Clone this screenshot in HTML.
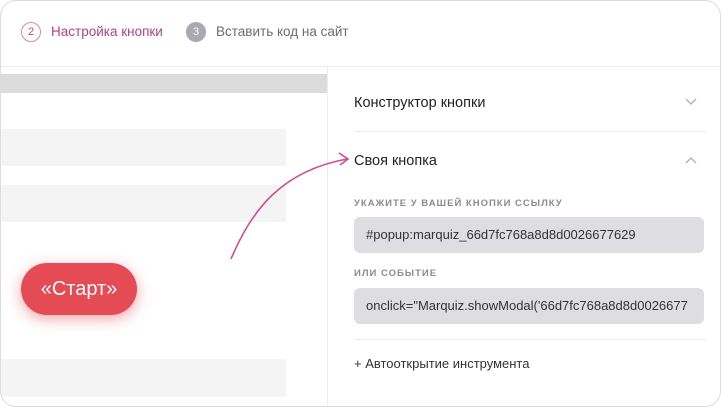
<!DOCTYPE html>
<html><head><meta charset="utf-8"><style>
*{margin:0;padding:0;box-sizing:border-box}
body{width:721px;height:407px;background:#fff;font-family:"Liberation Sans",sans-serif;position:relative;overflow:hidden}
.card{position:absolute;left:0;top:0;width:721px;height:407px;border:1px solid #dcdce0;border-radius:16px;overflow:hidden;background:#fff}
.abs{position:absolute}
.g{position:absolute;background:#f4f4f5;left:0;width:285px}
.lbl{position:absolute;left:353px;font-size:9.5px;letter-spacing:1px;color:#8a8a94;font-weight:bold}
.inp{position:absolute;left:353px;width:350px;height:36px;background:#dedee2;border-radius:6px;font-size:13px;color:#333;padding:10px 0 0 12px;white-space:nowrap;overflow:hidden}
</style></head><body><div class="card">
<div class="abs" style="left:20px;top:21px;width:20px;height:20px;border:1px solid #d88aa6;border-radius:50%;font-size:11px;color:#c04a7a;text-align:center;line-height:18px">2</div>
<div class="abs" style="left:50px;top:23px;font-size:13.5px;color:#b0457a">Настройка кнопки</div>
<div class="abs" style="left:185px;top:21px;width:20px;height:20px;background:#a9a9b1;border-radius:50%;font-size:11px;color:#fff;text-align:center;line-height:20px">3</div>
<div class="abs" style="left:215px;top:23px;font-size:13.5px;color:#6b6b75">Вставить код на сайт</div>
<div class="abs" style="left:0;top:65px;width:721px;height:1px;background:#ececef"></div>
<div class="abs" style="left:0;top:73px;width:326px;height:19px;background:#dcdcdc"></div>
<div class="abs" style="left:326px;top:66px;width:1px;height:341px;background:#ececef"></div>
<div class="g" style="top:128px;height:37px"></div>
<div class="g" style="top:184px;height:37px"></div>
<div class="g" style="top:358px;height:38px"></div>
<div class="abs" style="left:20px;top:262px;width:116px;height:52px;border-radius:26px;background:#e54b55;box-shadow:0 4px 14px rgba(229,75,85,.5);color:#fff;font-size:20px;text-align:center;line-height:52px">«Старт»</div>
<svg class="abs" style="left:0;top:0" width="721" height="407"><path d="M230 258 C250 210 280 170 346 158" fill="none" stroke="#d44a8a" stroke-width="1.6"/><path d="M338 152 L347 158 L339 164" fill="none" stroke="#d44a8a" stroke-width="1.6"/>
<path d="M685 98 L690 103 L695 98" fill="none" stroke="#b5b5bc" stroke-width="1.5"/><path d="M685 162 L690 157 L695 162" fill="none" stroke="#b5b5bc" stroke-width="1.5"/></svg>
<div class="abs" style="left:353px;top:94px;font-size:14.5px;color:#222">Конструктор кнопки</div>
<div class="abs" style="left:353px;top:130px;width:352px;height:1px;background:#ececef"></div>
<div class="abs" style="left:353px;top:152px;font-size:14.5px;color:#222">Своя кнопка</div>
<div class="lbl" style="top:197px">УКАЖИТЕ У ВАШЕЙ КНОПКИ ССЫЛКУ</div>
<div class="inp" style="top:216px">#popup:marquiz_66d7fc768a8d8d0026677629</div>
<div class="lbl" style="top:267px">ИЛИ СОБЫТИЕ</div>
<div class="inp" style="top:287px">onclick="Marquiz.showModal('66d7fc768a8d8d0026677</div>
<div class="abs" style="left:353px;top:338px;width:352px;height:1px;background:#ececef"></div>
<div class="abs" style="left:353px;top:355px;font-size:13px;color:#333">+ Автооткрытие инструмента</div>
</div></body></html>
